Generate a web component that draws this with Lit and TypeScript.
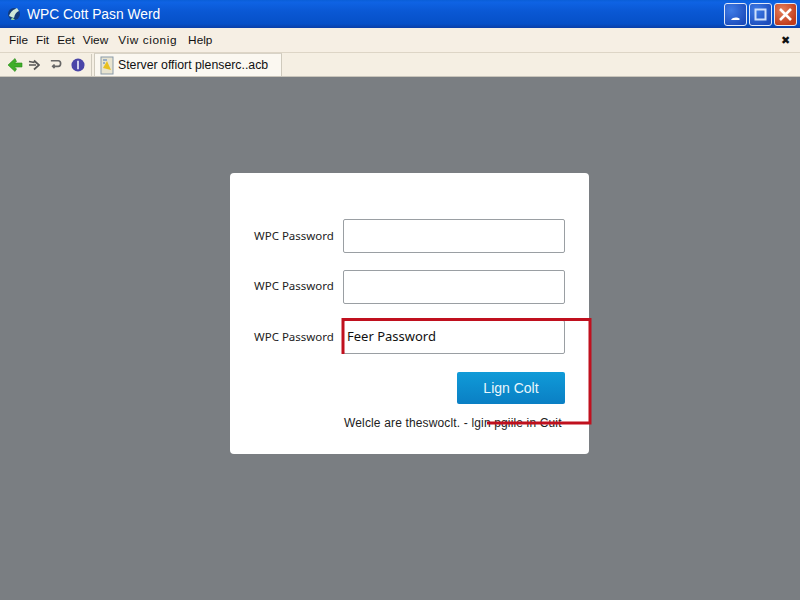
import { LitElement, html, css, svg } from "lit";
import { customElement } from "lit/decorators.js";

@customElement("app-root")
export class AppRoot extends LitElement {
  static styles = css`
    :host { display: flex; flex-direction: column; width: 800px; height: 600px; overflow: hidden; font-family: "Liberation Sans", Arial, sans-serif; color: #111; background: #7a7e82; }
    .title { height: 28px; flex: none; box-sizing: border-box; display: flex; align-items: center; padding: 0 3px 0 6px; background: linear-gradient(180deg, #0a5fd8 0, #0f63e4 8%, #0a58d4 40%, #0650c8 85%, #0a3fa8 100%); color: #fff; }
    .title .logo { width: 16px; height: 16px; margin-right: 5px; flex: none; }
    .title .name { font-size: 13.8px; flex: 1; padding-top: 1px; }
    .wb { width: 23px; height: 23px; box-sizing: border-box; border: 1px solid #dfe8f8; border-radius: 3px; margin-left: 2px; display: flex; align-items: center; justify-content: center; background: radial-gradient(circle at 30% 30%, #3f7ce6, #1c4cbc 80%); position: relative; }
    .wb.close { background: radial-gradient(circle at 35% 30%, #e4805c, #c03c1c 75%); }
    .menu { height: 25px; flex: none; box-sizing: border-box; display: flex; align-items: center; gap: 8px; padding: 0 10px 0 9px; background: #f6efe4; border-bottom: 1px solid #ddd5c6; font-size: 11.8px; }
    .menu span { white-space: nowrap; }
    .menu .wide { letter-spacing: 0.6px; margin-left: 2px; }
    .menu .help { margin-left: 3px; }
    .menu .x { margin-left: auto; font-size: 11px; line-height: 1; }
    .tools { height: 24px; flex: none; box-sizing: border-box; display: flex; align-items: center; padding-left: 7px; background: #f5efe3; border-bottom: 1px solid #c9c5bb; }
    .tools svg { flex: none; }
    .tools .back { margin-right: 5px; }
    .tools .fwd { margin-right: 9px; }
    .tools .rel { margin-right: 9px; }
    .tools .info { margin-right: 6px; }
    .tab { margin-left: 1px; height: 23px; width: 188px; box-sizing: border-box; display: flex; align-items: center; gap: 4px; padding-left: 5px; font-size: 12.3px; background: #fbf8f1; border: 1px solid #cfcabd; border-bottom: none; border-top-color: #d8d3c7; white-space: nowrap; }
    .main { flex: 1; padding: 96px 0 0 230px; border-left: 1px solid #3d66b8; margin-left: -1px; }
    .card { position: relative; box-sizing: border-box; width: 359px; height: 281px; background: #fff; border-radius: 4px; padding: 46px 24px 0 24px; display: flex; flex-direction: column; }
    .row { display: flex; align-items: center; height: 34px; margin-bottom: 16.5px; }
    .row label { width: 89px; font-family: "Noto Sans", sans-serif; font-size: 11.5px; line-height: 14px; padding-bottom: 1px; color: #222; white-space: nowrap; flex: none; }
    .input { width: 222px; height: 34px; box-sizing: border-box; border: 1px solid #9a9fa3; border-radius: 2px; background: #fff; font-family: "Noto Sans", sans-serif; font-size: 13px; line-height: 30px; padding-left: 3px; color: #111; }
    .actions { display: flex; justify-content: flex-end; margin-top: 1px; width: 311px; }
    .btn { width: 108px; height: 32px; border: none; border-radius: 2px; background: linear-gradient(180deg, #109bd8, #0a7fc4); color: #eaf7fc; font: 14px "Liberation Sans", Arial, sans-serif; display: flex; align-items: center; justify-content: center; }
    .foot { margin: 12px 0 0 90px; font-size: 12px; letter-spacing: 0.15px; white-space: nowrap; color: #222; }
    .mark { position: absolute; left: 112px; top: 145px; width: 250px; height: 108px; pointer-events: none; overflow: visible; }
  `;

  render() {
    return html`
      <div class="title">
        <svg class="logo" viewBox="0 0 16 16">
          <circle cx="8" cy="8" r="6" fill="#123a7a"/>
          <path d="M3 10 C5 5 7 4 11 2 L13 5 C10 6 9 8 8 12 Z" fill="#cfe8d8"/>
          <path d="M6 11 l3 3 l-4 0 z" fill="#8fd0a0"/>
        </svg>
        <span class="name">WPC Cott Pasn Werd</span>
        <div class="wb">
          <svg width="21" height="21" viewBox="0 0 21 21"><path d="M6 16 C8 13 12 13 15 15 L14 16 Z" fill="#fff"/></svg>
        </div>
        <div class="wb">
          <svg width="21" height="21" viewBox="0 0 21 21"><rect x="5.5" y="5.5" width="10" height="10" fill="none" stroke="#cfe0fa" stroke-width="2"/></svg>
        </div>
        <div class="wb close">
          <svg width="21" height="21" viewBox="0 0 21 21"><path d="M5 5 L16 16 M16 5 L5 16" stroke="#fff" stroke-width="2.6"/></svg>
        </div>
      </div>
      <div class="menu">
        <span>File</span><span>Fit</span><span>Eet</span><span>View</span><span class="wide">Viw cionig</span><span class="help">Help</span>
        <span class="x">✖</span>
      </div>
      <div class="tools">
        <svg class="back" width="16" height="16" viewBox="0 0 16 16"><path d="M1 8 L8 1.5 L9.5 4.5 L7.5 6 H15 V10 H7.5 L9.5 12 L8 14.5 Z" fill="#3fae2a" stroke="#2a8a1c" stroke-width="0.6"/></svg>
        <svg class="fwd" width="12" height="12" viewBox="0 0 12 12"><path d="M1 2.5 L6.5 3.5 M6 1.5 L11 6 L6 10.5 M1 6 H8" fill="none" stroke="#555" stroke-width="1.7"/></svg>
        <svg class="rel" width="13" height="13" viewBox="0 0 14 14"><path d="M2 3 H10 Q12.5 3 12.5 6 Q12.5 9 10 9 H4 M6 7 L4 9 L6 11" fill="none" stroke="#666" stroke-width="1.8"/></svg>
        <svg class="info" width="14" height="14" viewBox="0 0 15 15"><circle cx="7.5" cy="7.5" r="7" fill="#4a45a8"/><path d="M7.5 3 V12" stroke="#d8d8f0" stroke-width="2"/></svg>
        <svg width="2" height="22" viewBox="0 0 2 22"><path d="M0.5 0 V22" stroke="#cfcabd"/></svg>
        <div class="tab">
          <svg width="14" height="19" viewBox="0 0 14 19"><rect x="1" y="1" width="12" height="17" fill="#e8e4d0" stroke="#8a9aa8"/><path d="M3 12 L7 5 L11 14 Z" fill="#e8c020"/><path d="M3 4 H7 M3 7 H5" stroke="#4a78b8"/></svg>
          <span>Sterver offiort plenserc..acb</span>
        </div>
      </div>
      <div class="main">
        <div class="card">
          <div class="row"><label>WPC Password</label><div class="input"></div></div>
          <div class="row"><label>WPC Password</label><div class="input"></div></div>
          <div class="row"><label>WPC Password</label><div class="input">Feer Password</div></div>
          <div class="actions"><div class="btn">Lign Colt</div></div>
          <div class="foot">Welcle are theswoclt. - lgin pgiile in Cuit</div>
          <svg class="mark" viewBox="0 0 250 108">
            ${svg`<path d="M1 36 V1.5 H248 V105 H145" fill="none" stroke="#c0101e" stroke-width="3"/>`}
          </svg>
        </div>
      </div>
    `;
  }
}
